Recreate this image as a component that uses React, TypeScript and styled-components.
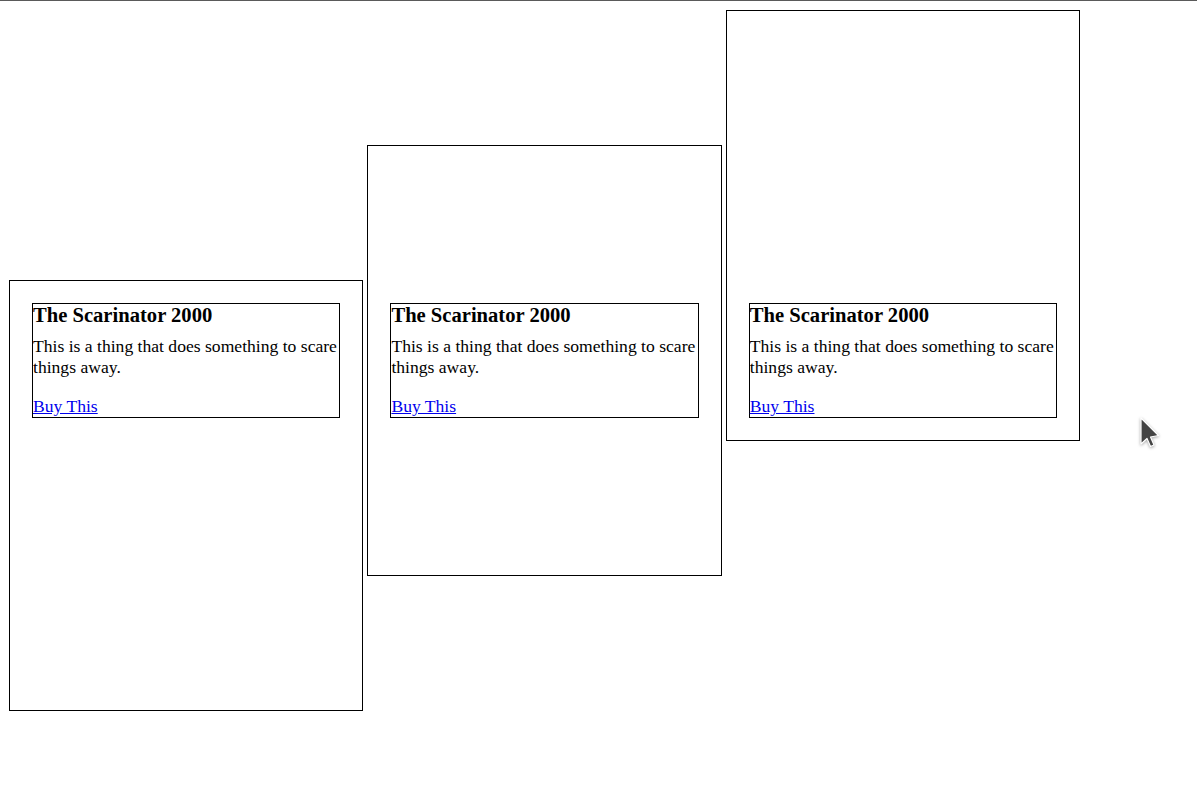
import styled, { createGlobalStyle } from "styled-components";

const GlobalStyle = createGlobalStyle`
  html, body {
    margin: 0;
    padding: 0;
    background: #fff;
  }
  body {
    font-family: "Liberation Serif", "Times New Roman", serif;
    color: #000;
  }
`;

const TopRule = styled.div`
  height: 1px;
  background: #5a5a5a;
`;

const Page = styled.div`
  position: relative;
  min-height: 784px;
`;

const Row = styled.div`
  display: flex;
  align-items: baseline;
  gap: 4px;
  padding: 9px;
`;

const Box = styled.div<{ $justify: string }>`
  display: flex;
  flex-direction: column;
  justify-content: ${(p) => p.$justify};
  flex: none;
  width: 308.4px;
  height: 385px;
  padding: 22px;
  border: 1px solid #000;
`;

const Card = styled.div`
  border: 1px solid #000;
  font-size: 17.6px;
  line-height: 21px;
`;

const Title = styled.h3`
  margin: 0;
  font-size: 20.6px;
  line-height: normal;
  font-weight: bold;
`;

const Text = styled.p`
  margin: 9px 0 17.6px;
`;

const BuyLink = styled.a`
  color: #0000ee;
`;

const Cursor = styled.svg`
  position: absolute;
  left: 1139px;
  top: 415px;
  width: 24px;
  height: 34px;
  filter: drop-shadow(0 1px 1.5px rgba(0, 0, 0, 0.35));
`;

const placements = ["flex-start", "center", "flex-end"];

export default function App() {
  return (
    <>
      <GlobalStyle />
      <TopRule />
      <Page>
        <Row>
          {placements.map((justify) => (
            <Box key={justify} $justify={justify}>
              <Card>
                <Title>The Scarinator 2000</Title>
                <Text>This is a thing that does something to scare things away.</Text>
                <BuyLink href="#">Buy This</BuyLink>
              </Card>
            </Box>
          ))}
        </Row>
        <Cursor viewBox="-2 -2 24 34">
          <path
            d="M0 0 L0 26 L6 20.5 L9.5 28.5 L13 27 L9.5 19 L17.5 17.5 Z"
            fill="#444"
            stroke="#fff"
            strokeWidth="1.2"
            strokeLinejoin="round"
          />
        </Cursor>
      </Page>
    </>
  );
}
